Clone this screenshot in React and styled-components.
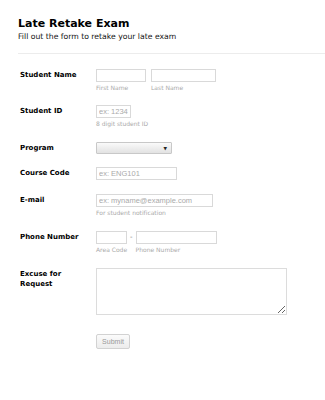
import React from 'react'
import styled, { createGlobalStyle } from 'styled-components'

const GlobalStyle = createGlobalStyle`
  html, body {
    margin: 0;
    padding: 0;
    background: #fff;
  }
  body {
    font-family: "DejaVu Sans", Verdana, sans-serif;
    font-variant-ligatures: none;
    color: #000;
  }
`

const Page = styled.div`
  width: 325px;
  height: 400px;
  overflow: hidden;
  padding: 17px 0 0 18px;
  box-sizing: border-box;
`

const Header = styled.div`
  padding-bottom: 11px;
  border-bottom: 1px solid #ececec;
  margin-bottom: 9px;
`

const Title = styled.h1`
  margin: 0;
  font-size: 11px;
  font-weight: bold;
  line-height: 13px;
`

const Subtitle = styled.p`
  margin: 2px 0 0;
  font-size: 7.7px;
  font-weight: normal;
  line-height: 10px;
  color: #111;
`

const Row = styled.div`
  display: grid;
  grid-template-columns: 76px 1fr;
  padding: 6px 0 ${props => props.$bottom}px 2px;
`

const Label = styled.label`
  font-size: 7px;
  font-weight: bold;
  line-height: 10px;
  padding-top: 1px;
`

const Field = styled.div`
  display: flex;
  align-items: flex-start;
  gap: ${props => props.$gap || 5}px;
`

const Group = styled.div`
  display: flex;
  flex-direction: column;
`

const Input = styled.input`
  box-sizing: border-box;
  width: ${props => props.$w}px;
  height: 13px;
  margin: 0;
  padding: 0 2px;
  border: 1px solid #d9d9d9;
  font-family: "Liberation Sans", Arial, sans-serif;
  font-size: 7.5px;
  color: #555;
  outline: none;
  &::placeholder {
    color: #aaa;
  }
`

const Sub = styled.span`
  font-size: 6px;
  line-height: 8px;
  margin-top: 2px;
  color: #aaa;
`

const Select = styled.div`
  box-sizing: border-box;
  width: 76px;
  height: 12px;
  border: 1px solid #c8c8c8;
  border-radius: 1px;
  background: linear-gradient(#fafafa, #e2e2e2);
  display: flex;
  align-items: center;
  justify-content: flex-end;
  padding-right: 4px;
  font-size: 4.5px;
  color: #222;
`

const Dash = styled.span`
  font-size: 7px;
  line-height: 13px;
  color: #777;
`

const TextArea = styled.textarea`
  box-sizing: border-box;
  width: 191px;
  height: 47px;
  margin: 0;
  border: 1px solid #dcdcdc;
  resize: both;
  outline: none;
`

const Button = styled.button`
  box-sizing: border-box;
  width: 34px;
  height: 15px;
  padding: 0;
  border: 1px solid #d2d2d2;
  border-radius: 2px;
  background: linear-gradient(#fbfbfb, #ececec);
  font-family: "Liberation Sans", Arial, sans-serif;
  font-size: 7px;
  color: #999;
`

export default function App() {
  return (
    <Page>
      <GlobalStyle />
      <Header>
        <Title>Late Retake Exam</Title>
        <Subtitle>Fill out the form to retake your late exam</Subtitle>
      </Header>

      <Row $bottom={7}>
        <Label>Student Name</Label>
        <Field>
          <Group>
            <Input $w={50} />
            <Sub>First Name</Sub>
          </Group>
          <Group>
            <Input $w={65} />
            <Sub>Last Name</Sub>
          </Group>
        </Field>
      </Row>

      <Row $bottom={8}>
        <Label>Student ID</Label>
        <Field>
          <Group>
            <Input $w={35} placeholder="ex: 12345678" />
            <Sub>8 digit student ID</Sub>
          </Group>
        </Field>
      </Row>

      <Row $bottom={7}>
        <Label>Program</Label>
        <Field>
          <Select>▼</Select>
        </Field>
      </Row>

      <Row $bottom={8}>
        <Label>Course Code</Label>
        <Field>
          <Input $w={81} placeholder="ex: ENG101" />
        </Field>
      </Row>

      <Row $bottom={8}>
        <Label>E-mail</Label>
        <Field>
          <Group>
            <Input $w={117} placeholder="ex: myname@example.com" />
            <Sub>For student notification</Sub>
          </Group>
        </Field>
      </Row>

      <Row $bottom={8}>
        <Label>Phone Number</Label>
        <Field $gap={3}>
          <Group>
            <Input $w={31} />
            <Sub>Area Code</Sub>
          </Group>
          <Dash>-</Dash>
          <Group>
            <Input $w={81} />
            <Sub>Phone Number</Sub>
          </Group>
        </Field>
      </Row>

      <Row $bottom={13}>
        <Label>Excuse for<br />Request</Label>
        <Field>
          <TextArea />
        </Field>
      </Row>

      <Row $bottom={0}>
        <span />
        <Field>
          <Button>Submit</Button>
        </Field>
      </Row>
    </Page>
  )
}
